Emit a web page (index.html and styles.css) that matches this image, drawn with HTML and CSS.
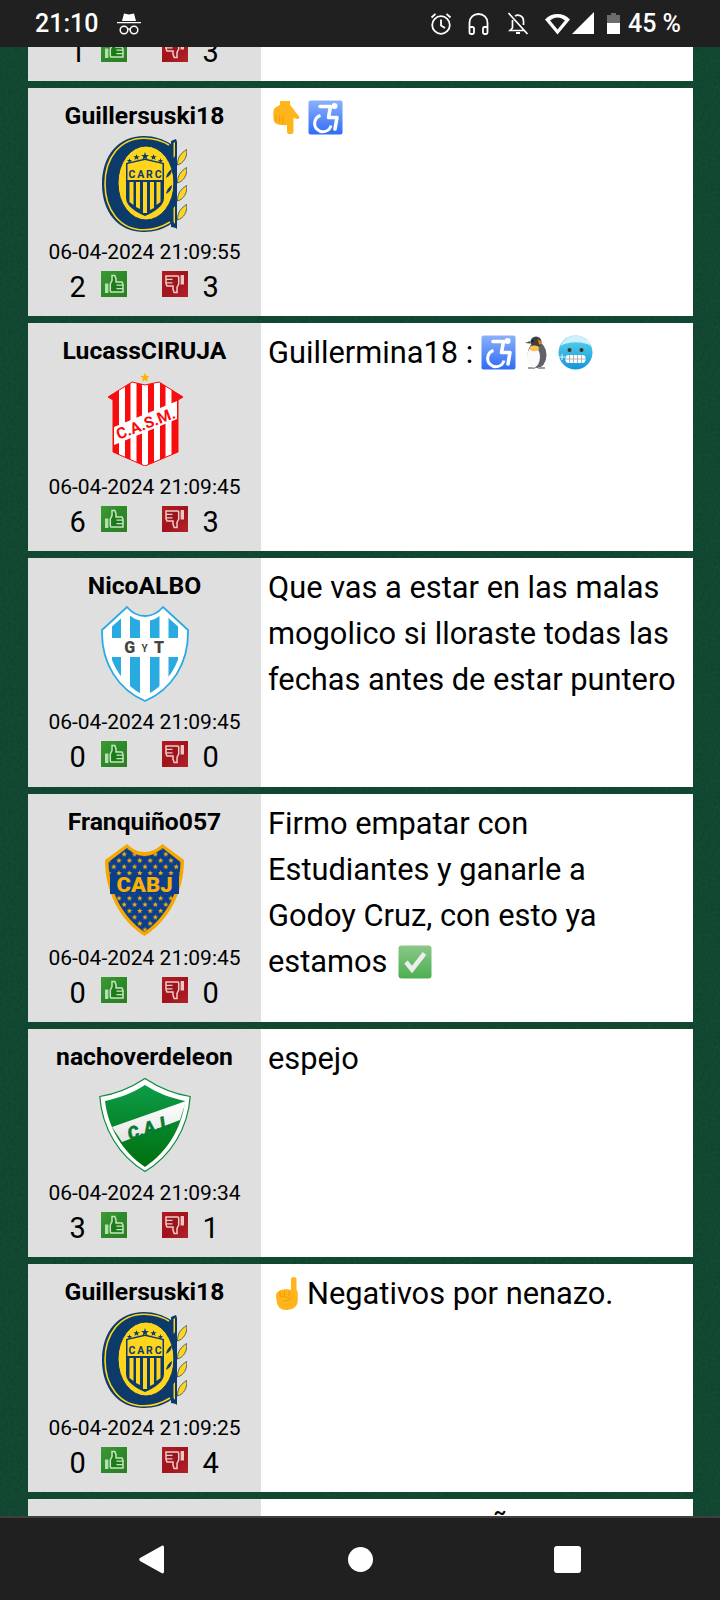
FILE: index.html
```html
<!DOCTYPE html>
<html lang="es">
<head>
<meta charset="utf-8">
<title>Comentarios</title>
<link rel="stylesheet" href="styles.css">
</head>
<body>
<svg class="defs" width="0" height="0" aria-hidden="true">
  <defs>
    <linearGradient id="gGreen" x1="0" y1="0" x2="1" y2="1"><stop offset="0" stop-color="#3f9a33"/><stop offset=".5" stop-color="#2b8a2a"/><stop offset="1" stop-color="#2f7d22"/></linearGradient>
    <linearGradient id="gRed" x1="0" y1="0" x2="1" y2="1"><stop offset="0" stop-color="#b01c22"/><stop offset=".5" stop-color="#a1141c"/><stop offset="1" stop-color="#b2222a"/></linearGradient>
    <linearGradient id="gBlue" x1="0" y1="0" x2="0" y2="1"><stop offset="0" stop-color="#8ab1fb"/><stop offset="1" stop-color="#2f6cf6"/></linearGradient>
    <linearGradient id="gCold" x1="0" y1="0" x2="0" y2="1"><stop offset="0" stop-color="#5cd6ec"/><stop offset="1" stop-color="#1397dc"/></linearGradient>
    <linearGradient id="gCheck" x1="0" y1="0" x2="0" y2="1"><stop offset="0" stop-color="#8bc78a"/><stop offset="1" stop-color="#4caf50"/></linearGradient>
    <linearGradient id="gCai" x1="0" y1="0" x2="0" y2="1"><stop offset="0" stop-color="#0d9c47"/><stop offset="1" stop-color="#006f0e"/></linearGradient>
    <linearGradient id="gBand" x1="0" y1="0" x2="0" y2="1"><stop offset="0" stop-color="#fff"/><stop offset="1" stop-color="#e4e4e4"/></linearGradient>
    <filter id="soft" x="-5%" y="-5%" width="110%" height="110%"><feGaussianBlur stdDeviation=".4"/></filter>
    <clipPath id="clipSm"><path d="M37 12 L24 9 L0 24 L5 27 V79 L37 93 L70 79 V27 L75 24 L51 9 Z"/></clipPath>
    <clipPath id="clipGyt"><path d="M26 7 C31 12 37 15 44 15 C51 15 57 12 62 7 L82 25 C82 55 68 78 44 90 C20 78 6 55 6 25 Z"/></clipPath>
    <pattern id="starsBoca" width="10.4" height="12.6" patternUnits="userSpaceOnUse" x="1" y="1">
      <path transform="translate(2.6 3)" fill="#f9b000" d="M0 -2.900 L.71 -.97 L2.760 -.9 L1.140 .37 L1.700 2.350 L0 1.200 L-1.700 2.350 L-1.140 .37 L-2.760 -.9 L-.71 -.97 Z"/>
      <path transform="translate(7.8 9.3)" fill="#f9b000" d="M0 -2.900 L.71 -.97 L2.760 -.9 L1.140 .37 L1.700 2.350 L0 1.200 L-1.700 2.350 L-1.140 .37 L-2.760 -.9 L-.71 -.97 Z"/>
    </pattern>
    <symbol id="up" viewBox="0 0 26 26">
      <rect width="26" height="26" fill="url(#gGreen)"/>
      <g filter="url(#soft)">
        <rect x="4" y="12.500" width="3.400" height="9.500" fill="#b5dfae"/>
        <path d="M9.300 13 L11 9.500 V4.600 H13.800 L15 8 V11 H21 L22 13.500 V21 H10 L9.300 20 Z" fill="#1f7a1f" stroke="#c4e6ba" stroke-width="1.500"/>
        <path d="M15.500 14.200 H22 M15.500 17.600 H22" stroke="#c4e6ba" stroke-width="1.300"/>
      </g>
    </symbol>
    <symbol id="down" viewBox="0 0 26 26">
      <rect width="26" height="26" fill="url(#gRed)"/>
      <g filter="url(#soft)">
        <rect x="18.600" y="4" width="3.400" height="9.500" fill="#eec4c4"/>
        <path d="M16.700 13 L15 16.500 V21.400 H12.200 L11 18 V15 H5 L4 12.500 V5 H16 L16.700 6 Z" fill="#98141a" stroke="#f0cccc" stroke-width="1.500"/>
        <path d="M10.500 11.800 H4 M10.500 8.400 H4" stroke="#f0cccc" stroke-width="1.300"/>
      </g>
    </symbol>
    <symbol id="wheel" viewBox="0 0 35 35">
      <rect x=".5" y=".5" width="34" height="34" rx="2" fill="url(#gBlue)"/>
      <circle cx="26.500" cy="6" r="3" fill="#fff"/>
      <path d="M12 6.500 H22.500 L20.500 17.500 H29 L27 29" fill="none" stroke="#fff" stroke-width="3.600" stroke-linejoin="round" stroke-linecap="round"/>
      <path d="M12.500 15.500 A8.300 8.300 0 1 0 23 25.500" fill="none" stroke="#fff" stroke-width="3"/>
    </symbol>
    <symbol id="rosario" viewBox="0 0 85 96">
      <path d="M74 3 L69 5 V8 C61 3 52 0 42 0 C16 0 0 20 0 48 C0 76 16 96 42 96 C52 96 62 93 69 88 V91 L75 92 Z" fill="#0b3a6b"/>
      <path d="M67 9 C59 4 51 2.200 42 2.200 C18 2.200 3 22 3 48 C3 74 18 93.800 42 93.800 C51 93.800 60 91 68 86" fill="none" stroke="#fed41d" stroke-width="1.600"/>
      <ellipse cx="44" cy="47" rx="28" ry="37" fill="#fed41d" stroke="#0b3a6b" stroke-width="1"/>
      <path d="M24 27 L43 22.500 L62 27 V62 C62 70 52 76 43 80 C34 76 24 70 24 62 Z" fill="#0b3a6b"/>
      <path d="M25.500 28 L43 24 L60.500 28 V44 H25.500 Z" fill="#fed41d"/>
      <path d="M27.500 46 H31.500 V69 L27.500 66 Z M34 46 H38 V73 L34 71 Z M41 46 H45 V77 L41 77 Z M48 46 H52 V72 L48 74 Z M54.500 46 H58.500 V66 L54.500 69 Z" fill="#fed41d"/>
      <text class="crest-txt" x="43" y="42" font-size="10.500" text-anchor="middle" textLength="33" fill="#0b3a6b">CARC</text>
      <path fill="#0b3a6b" transform="translate(0 2)" d="M43 14 L44 17 H47 L44.600 18.700 L45.500 21.500 L43 20 L40.500 21.500 L41.400 18.700 L39 17 H42 Z M34.500 16 L35.300 18.300 H37.700 L35.800 19.700 L36.500 22 L34.500 20.600 L32.500 22 L33.200 19.700 L31.300 18.300 H33.700 Z M51.500 16 L52.300 18.300 H54.700 L52.800 19.700 L53.500 22 L51.500 20.600 L49.500 22 L50.200 19.700 L48.300 18.300 H50.700 Z M27.500 20 L28.100 22 H30.100 L28.500 23.200 L29.100 25 L27.500 23.900 L25.900 25 L26.500 23.200 L24.900 22 H26.900 Z M58.500 20 L59.100 22 H61.100 L59.500 23.200 L60.100 25 L58.500 23.900 L56.900 25 L57.500 23.200 L55.900 22 H57.900 Z"/>
      <path d="M64 42 C65 37 67 35 70 33 C70 37 68 40 64 42 Z M64 58 C65 53 67 51 70 49 C70 53 68 56 64 58 Z" fill="#0b3a6b"/>
      <path d="M72 12 L75 3 V93 L71 90 Z" fill="#0b3a6b"/>
      <path fill="#fed41d" stroke="#0b3a6b" stroke-width=".7" d="M75.500 29 C75.500 21 79 17 84.800 13.500 C85.300 21 82 27 75.500 29 Z M75.500 47 C75.500 39 79 35 84.800 31.500 C85.300 39 82 45 75.500 47 Z M75.500 65 C75.500 57 79 53 84.800 49.500 C85.300 57 82 63 75.500 65 Z M75.500 84 C75.500 76 79 72 84.800 68.500 C85.300 76 82 82 75.500 84 Z"/>
      <path fill="#fed41d" d="M71.500 7 L73 6 V20 L71.500 22 Z M71.500 72 L73 70 V88 L71.500 86 Z"/>
    </symbol>
  </defs>
</svg>

<div class="phone">
  <header class="status">
    <div class="status-left">
      <span class="clock">21:10</span>
      <svg class="ic-spy" viewBox="0 0 24 22" width="24" height="22"><path d="M5 8 L7 0.500 L12 1.500 L17 0.500 L19 8 Z M0 9 H24 V10.300 H0 Z" fill="#fff"/><circle cx="7" cy="17" r="3.800" fill="none" stroke="#fff" stroke-width="1.500"/><circle cx="17" cy="17" r="3.800" fill="none" stroke="#fff" stroke-width="1.500"/><path d="M10.500 16 H13.500" stroke="#fff" stroke-width="1.300"/></svg>
    </div>
    <div class="status-right">
      <svg width="22" height="23" viewBox="0 0 22 23" fill="none" stroke="#fff" stroke-width="1.800"><circle cx="11" cy="13" r="8.800"/><path d="M11 7.500 V13.500 L15 16 M1.500 5.500 L5.500 1.800 M20.500 5.500 L16.500 1.800"/></svg>
      <svg class="ic-gap-h" width="21" height="22" viewBox="0 0 21 22" fill="none" stroke="#fff" stroke-width="1.800"><path d="M1.500 15 V10 C1.500 4.500 5.500 1 10.500 1 C15.500 1 19.500 4.500 19.500 10 V15"/><rect x="1.500" y="14" width="4.500" height="7" rx="1.500"/><rect x="15" y="14" width="4.500" height="7" rx="1.500"/></svg>
      <svg class="ic-gap-b" width="22" height="23" viewBox="0 0 22 23" fill="none" stroke="#fff" stroke-width="1.700"><path d="M1.500 1 L20.500 22 M5.500 8 V16 L3 18.500 H17 M8 4 C11 2 16.500 3.500 16.500 9 V13"/><path d="M9 21 H13" stroke-width="2"/></svg>
      <svg class="ic-gap-w" width="25" height="22" viewBox="0 0 27 22" preserveAspectRatio="none"><path fill-rule="evenodd" d="M0 6.500 C7.500 -.8 19.500 -.8 27 6.500 L13.500 21.500 Z M5.500 7.500 L13.500 16.500 L21.500 7.500 C16.500 3.500 10.500 3.500 5.500 7.500 Z" fill="#fff"/></svg>
      <svg class="ic-gap-s" width="22" height="22" viewBox="0 0 22 22"><path d="M22 0 V22 H0 Z" fill="#fff"/></svg>
      <svg class="ic-gap-bt" width="13" height="21" viewBox="0 0 13 21"><path d="M4 0 H9 V2 H13 V10 H0 V2 H4 Z" fill="#6c6c6c"/><rect y="10" width="13" height="11" fill="#fff"/></svg>
      <span class="batt">45 %</span>
    </div>
  </header>

  <main class="feed">
    <div class="list">
      <article class="row">
        <div class="who">
          <div class="name">&nbsp;</div>
          <div class="crest"></div>
          <div class="date">&nbsp;</div>
          <div class="votes"><span class="n">1</span><svg class="thumb"><use href="#up"/></svg><svg class="thumb second"><use href="#down"/></svg><span class="n">3</span></div>
        </div>
        <div class="msg"></div>
      </article>

      <article class="row">
        <div class="who">
          <div class="name">Guillersuski18</div>
          <div class="crest"><svg width="85" height="96"><use href="#rosario"/></svg></div>
          <div class="date">06-04-2024 21:09:55</div>
          <div class="votes"><span class="n">2</span><svg class="thumb"><use href="#up"/></svg><svg class="thumb second"><use href="#down"/></svg><span class="n">3</span></div>
        </div>
        <div class="msg">
          <svg class="emo emo-hand" viewBox="0 0 27 35"><path d="M7 1 H17 V5 C20 8 23 13 26.500 17 C26 19.500 23.500 19.500 21.500 18 L20.500 17.500 V32 C20.500 35 14 35 14 32 V25 C10 25.500 5 25 2 23 C0 20 0 12 1 9 C2 7 5 6 7 5 Z" fill="#ffb41c"/><path d="M3 15 V21 M6.500 15 V23 M10 15 V24" stroke="#f09a00" stroke-width=".8"/></svg><svg class="emo emo-wheel"><use href="#wheel"/></svg>
        </div>
      </article>

      <article class="row">
        <div class="who">
          <div class="name">LucassCIRUJA</div>
          <div class="crest">
            <svg class="crest-sm" width="75" height="93" viewBox="0 0 75 93">
              <path d="M37 0 L38.400 2.800 L41.500 3.200 L39.200 5.300 L39.800 8.400 L37 6.900 L34.200 8.400 L34.800 5.300 L32.500 3.200 L35.600 2.800 Z" fill="#ffb300"/>
              <g clip-path="url(#clipSm)">
                <rect width="75" height="93" fill="#f70d0d"/>
                <path d="M11 0 H17 V93 H11 Z M22.500 0 H28.500 V93 H22.500 Z M34 0 H40 V93 H34 Z M46 0 H52 V93 H46 Z M57.500 0 H63.500 V93 H57.500 Z" fill="#fff"/>
              </g>
              <path d="M37 12 L24 9 L0 24 L5 27 V79 L37 93 L70 79 V27 L75 24 L51 9 Z" fill="none" stroke="#f70d0d" stroke-width="1"/>
              <path d="M6 54 L69 28 V46 L6 72 Z" fill="#fff"/>
              <text class="crest-txt" x="37.500" y="56" font-size="15.500" text-anchor="middle" fill="#f70d0d" transform="rotate(-21 37.500 50)">C.A.S.M.</text>
            </svg>
          </div>
          <div class="date">06-04-2024 21:09:45</div>
          <div class="votes"><span class="n">6</span><svg class="thumb"><use href="#up"/></svg><svg class="thumb second"><use href="#down"/></svg><span class="n">3</span></div>
        </div>
        <div class="msg">Guillermina18 : <svg class="emo"><use href="#wheel"/></svg><svg class="emo emo-peng" viewBox="0 0 24 33"><ellipse cx="12" cy="19" rx="9.500" ry="13" fill="#5f6368"/><circle cx="11" cy="6" r="5.500" fill="#3c4043"/><path d="M3 33 H10 V31 H3 Z M13 33 H20 V31 H13 Z" fill="#9e9e9e"/><ellipse cx="8.500" cy="21" rx="6.500" ry="10.500" fill="#fafafa"/><path d="M5 11 C8 9 13 9 14 12 C13 16 9 16 5 14 Z" fill="#ffc14d"/><path d="M13 3 L17.500 6.500 L14 9 Z" fill="#f57c00"/><path d="M0 7 L5.500 5 V7.500 Z" fill="#424242"/><circle cx="7.500" cy="5" r="1" fill="#111"/></svg><svg class="emo emo-face" viewBox="0 0 35 35"><circle cx="17.500" cy="17.500" r="17" fill="url(#gCold)"/><path d="M2.500 11 C6 3 13 .5 17.500 .5 C24 .5 30 4 33 11 C26 6 10 6 2.500 11 Z" fill="#cfeffa"/><circle cx="11.500" cy="15" r="2" fill="#4a2c1a"/><circle cx="23.500" cy="15" r="2" fill="#4a2c1a"/><rect x="7.500" y="20" width="20" height="8" rx="3" fill="#fff"/><path d="M7.500 24 H27.500 M11.500 20 V28 M15.500 20 V28 M19.500 20 V28 M23.500 20 V28" stroke="#9aa5ab" stroke-width=".8"/><path d="M30 3 V9 M27 6 H33 M4 19 V25 M1 22 H7" stroke="#e3f7fd" stroke-width="1"/></svg></div>
      </article>

      <article class="row">
        <div class="who">
          <div class="name">NicoALBO</div>
          <div class="crest">
            <svg width="88" height="96" viewBox="0 0 88 96">
              <path d="M26 1 C31 7 37 10 44 10 C51 10 57 7 62 1 L87 24 C88 58 70 84 44 95 C18 84 0 58 1 24 Z" fill="#fff" stroke="#29abe2" stroke-width="1.800"/>
              <g clip-path="url(#clipGyt)">
                <path d="M11 0 H20 V32 H11 Z M29 0 H39 V32 H29 Z M49 0 H58.500 V32 H49 Z M67.500 0 H77 V32 H67.500 Z M11 51 H20 V96 H11 Z M29 51 H39 V96 H29 Z M49 51 H58.500 V96 H49 Z M67.500 51 H77 V96 H67.500 Z" fill="#29abe2"/>
              </g>
              <text class="crest-heavy" x="28.700" y="47" font-size="16" text-anchor="middle" fill="#444">G</text>
              <text class="crest-txt" x="43.500" y="45.500" font-size="10" text-anchor="middle" fill="#444">Y</text>
              <text class="crest-heavy" x="58" y="47" font-size="16" text-anchor="middle" fill="#444">T</text>
            </svg>
          </div>
          <div class="date">06-04-2024 21:09:45</div>
          <div class="votes"><span class="n">0</span><svg class="thumb"><use href="#up"/></svg><svg class="thumb second"><use href="#down"/></svg><span class="n">0</span></div>
        </div>
        <div class="msg">Que vas a estar en las malas mogolico si lloraste todas las fechas antes de estar puntero</div>
      </article>

      <article class="row">
        <div class="who">
          <div class="name">Franquiño057</div>
          <div class="crest">
            <svg width="79" height="92" viewBox="0 0 79 92">
              <path d="M22 0 C27 5 33 8 39.500 8 C46 8 52 5 57.500 0 L79 16 C79 50 62 78 39.500 92 C17 78 0 50 0 16 Z" fill="#f5a800"/>
              <path d="M22 4 C27 9 33 12 39.500 12 C46 12 52 9 57.500 4 L75.500 18 C75 49 60 74 39.500 88 C19 74 4 49 3.500 18 Z" fill="#0b3f8e"/>
              <path d="M22 4 C27 9 33 12 39.500 12 C46 12 52 9 57.500 4 L75.500 18 C75 49 60 74 39.500 88 C19 74 4 49 3.500 18 Z" fill="url(#starsBoca)"/>
              <rect x="5" y="31" width="69" height="19" fill="#0b3f8e"/>
              <text class="crest-heavy" x="39.500" y="48" font-size="20" text-anchor="middle" textLength="56" lengthAdjust="spacingAndGlyphs" fill="#f9b000">CABJ</text>
            </svg>
          </div>
          <div class="date">06-04-2024 21:09:45</div>
          <div class="votes"><span class="n">0</span><svg class="thumb"><use href="#up"/></svg><svg class="thumb second"><use href="#down"/></svg><span class="n">0</span></div>
        </div>
        <div class="msg">Firmo empatar con Estudiantes y ganarle a Godoy Cruz, con esto ya estamos <svg class="emo emo-check" viewBox="0 0 34 34"><rect x=".5" y=".5" width="33" height="33" rx="3" fill="url(#gCheck)"/><path d="M8 17 L14 24.500 L26.500 8.500" fill="none" stroke="#eeeeee" stroke-width="4.500"/></svg></div>
      </article>

      <article class="row">
        <div class="who">
          <div class="name">nachoverdeleon</div>
          <div class="crest">
            <svg width="92" height="94" viewBox="0 0 92 94">
              <path d="M46 .5 C33 9 17 16 .8 18.500 C3 50 20 78 46 93.500 C72 78 89 50 91.200 18.500 C75 16 59 9 46 .5 Z" fill="#fff" stroke="#0a8a3c" stroke-width="1.200"/>
              <path d="M46 7 C34 15 20 20 6 23 C9 50 24 74 46 89 C68 74 83 50 86 23 C72 20 58 15 46 7 Z" fill="url(#gCai)"/>
              <path d="M13 49 L87 23 L81 42 L23 64 Z" fill="url(#gBand)"/>
              <text class="crest-it" x="50" y="56" font-size="18" text-anchor="middle" fill="#067a30" stroke="#067a30" stroke-width=".4" transform="rotate(-18 50 50)">C.A.I.</text>
            </svg>
          </div>
          <div class="date">06-04-2024 21:09:34</div>
          <div class="votes"><span class="n">3</span><svg class="thumb"><use href="#up"/></svg><svg class="thumb second"><use href="#down"/></svg><span class="n">1</span></div>
        </div>
        <div class="msg">espejo</div>
      </article>

      <article class="row">
        <div class="who">
          <div class="name">Guillersuski18</div>
          <div class="crest"><svg width="85" height="96"><use href="#rosario"/></svg></div>
          <div class="date">06-04-2024 21:09:25</div>
          <div class="votes"><span class="n">0</span><svg class="thumb"><use href="#up"/></svg><svg class="thumb second"><use href="#down"/></svg><span class="n">4</span></div>
        </div>
        <div class="msg"><svg class="emo emo-point" viewBox="0 0 22 33"><rect x="15" y="0" width="5.500" height="18" rx="2.700" fill="#ffb41c"/><path d="M3 14 C6 12 12 12 15 13 L21 13 C22 16 22 22 21.500 26 C20 31 15 33 10 33 C5 33 1.500 30 .8 25 L0 19 C0 16 1.500 15 3 14 Z" fill="#ffb41c"/><path d="M4 14 V19 M8.500 14 V19 M13 14 V19 M4 20 C8 19 12 20 15 22 C13 23 10 24 8 24" fill="none" stroke="#f09a00" stroke-width=".9"/></svg>Negativos por nenazo.</div>
      </article>

      <article class="row">
        <div class="who"></div>
        <div class="msg"><span class="clipped">Ñ</span></div>
      </article>
    </div>
  </main>

  <footer class="nav">
    <svg width="25" height="29" viewBox="0 0 25 29"><path d="M22.500 1 C24 0 25 1 25 2.500 V26.500 C25 28 24 29 22.500 28 L1 16 C0 15 0 14 1 13 Z" fill="#fff"/></svg>
    <svg class="nav-home" width="25" height="25" viewBox="0 0 25 25"><circle cx="12.500" cy="12.500" r="12.500" fill="#fff"/></svg>
    <svg width="27" height="27" viewBox="0 0 27 27"><rect width="27" height="27" rx="3" fill="#fff"/></svg>
  </footer>
</div>
</body>
</html>
```

FILE: styles.css
```css
* { box-sizing: border-box; }
html, body { margin: 0; padding: 0; }
body { width: 720px; height: 1600px; overflow: hidden; font-family: Roboto, "Liberation Sans", sans-serif; color: #000; }
.defs { display: block; height: 0; }

.phone { width: 720px; height: 1600px; display: flex; flex-direction: column; background-color: #124b33; background-image:
  url("data:image/svg+xml,%3Csvg xmlns='http://www.w3.org/2000/svg' width='240' height='240'%3E%3Cfilter id='n'%3E%3CfeTurbulence type='fractalNoise' baseFrequency='.35' numOctaves='2'/%3E%3CfeColorMatrix values='0 0 0 0 .005 0 0 0 0 .04 0 0 0 0 .02 0 0 0 .9 -.25'/%3E%3C/filter%3E%3Crect width='240' height='240' filter='url(%23n)'/%3E%3C/svg%3E"); }

.status { flex: 0 0 47px; height: 47px; background: #202020; color: #fff; display: flex; justify-content: space-between; align-items: center; padding: 0 39px 0 35px; position: relative; z-index: 2; }
.status-left { display: flex; align-items: center; gap: 19px; }
.clock { font-size: 25px; font-weight: 500; }
.status-right { display: flex; align-items: center; }
.ic-gap-h { margin-left: 16px; }
.ic-gap-b { margin-left: 18px; }
.ic-gap-w { margin-left: 16px; }
.ic-gap-s { margin-left: 2px; margin-bottom: 1px; }
.ic-gap-bt { margin-left: 13px; }
.batt { font-size: 25px; font-weight: 500; margin-left: 8px; }

.feed { flex: 1 1 0; min-height: 0; overflow: hidden; padding: 0 27.5px 0 28px; }
.list { margin-top: -194px; display: flex; flex-direction: column; gap: 7px; }

.row { display: flex; height: 228.170px; flex: none; }
.who { flex: 0 0 233px; background: #dfdfdf; padding-top: 12px; display: flex; flex-direction: column; align-items: center; }
.name { font-size: 24.700px; font-weight: 700; line-height: 32px; height: 32px; white-space: nowrap; }
.crest { height: 96px; margin-top: 4px; display: flex; align-items: center; justify-content: center; }
.crest-sm { margin-left: 1px; }
.date { font-size: 21px; line-height: 28px; margin-top: 6px; white-space: nowrap; }
.votes { display: flex; align-items: baseline; margin-top: 5px; line-height: 26px; margin-left: -1px; }
.n { font-size: 29px; width: 16px; text-align: center; }
.thumb { width: 26px; height: 26px; margin: 0 15px; display: block; }
.thumb.second { margin-left: 20px; margin-right: 15px; }

.msg { flex: 1; background: #fff; padding: 7px 14px 0 7px; font-size: 30.800px; line-height: 46px; }
.emo { width: 35px; height: 35px; vertical-align: -7px; }
.emo-hand { width: 27px; margin: 0 1px 0 5px; }
.emo-wheel { margin-left: 7px; }
.emo-peng { width: 24px; margin-left: 9px; }
.emo-face { margin-left: 9px; }
.emo-check { width: 34px; height: 34px; margin-left: 3px; }
.emo-point { width: 22px; height: 33px; vertical-align: -6px; margin: 0 9px 0 8px; }
.clipped { padding-left: 221px; }

.crest-txt { font-family: Roboto, "Liberation Sans", sans-serif; font-weight: 700; }
.crest-heavy { font-family: Roboto, "Liberation Sans", sans-serif; font-weight: 900; }
.crest-it { font-family: Roboto, "Liberation Sans", sans-serif; font-style: italic; font-weight: 900; }

.nav { flex: 0 0 84px; height: 84px; background: #202020; border-top: 2px solid #3f3f3f; display: flex; position: relative; z-index: 2; align-items: center; padding: 0 139px; justify-content: space-between; }
.nav-home { margin-left: 3px; }
```
